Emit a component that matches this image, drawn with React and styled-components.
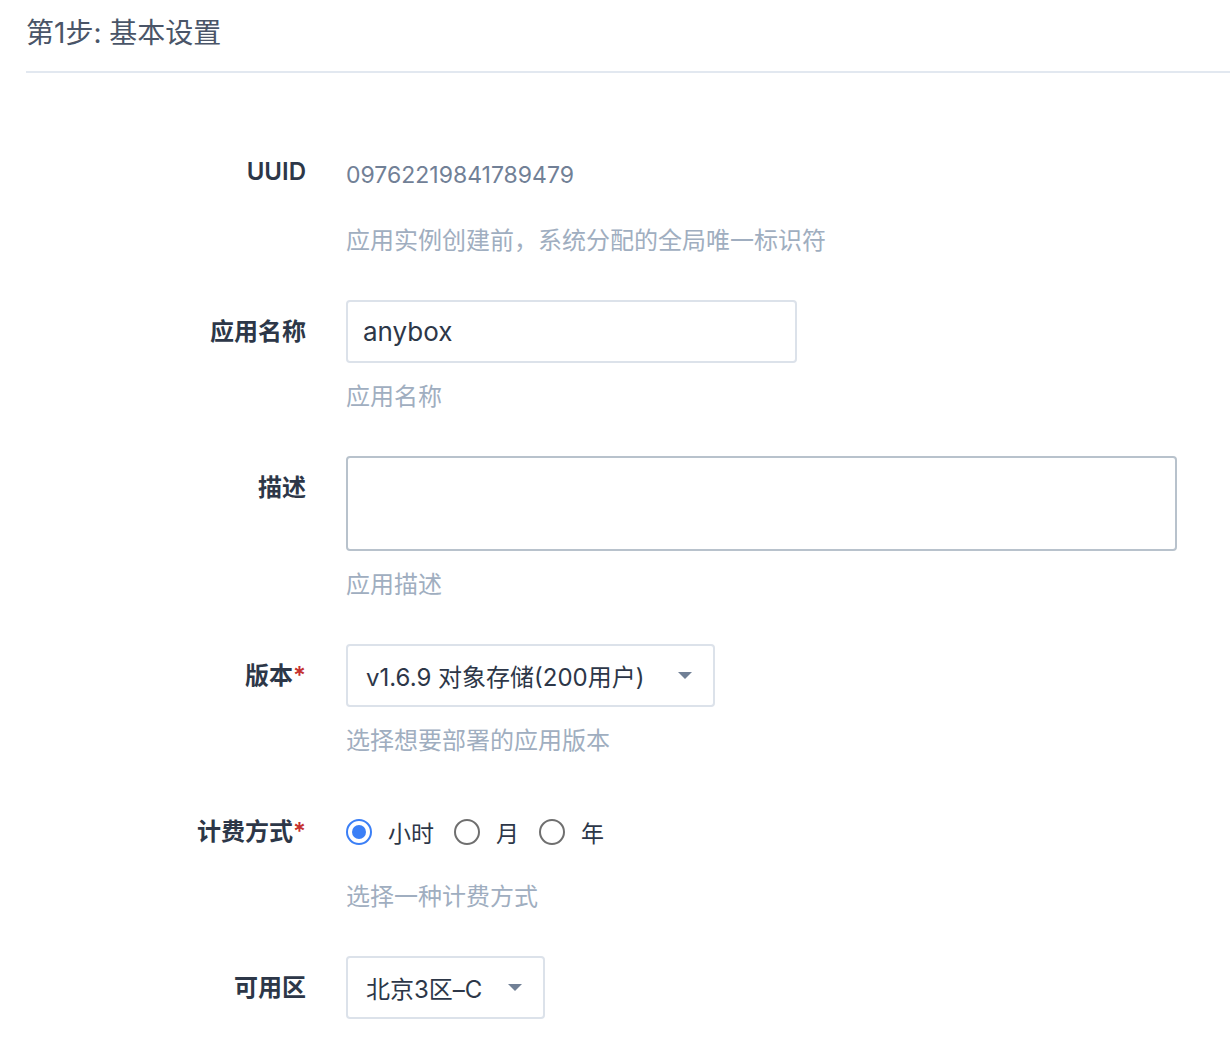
import React from 'react'
import styled, { createGlobalStyle } from 'styled-components'

const GlobalStyle = createGlobalStyle`
    html, body {
        margin: 0;
        padding: 0;
        background: #fff;
    }
    body {
        font-family: Inter, "Noto Sans CJK SC", sans-serif;
        color: #2d3748;
    }
    * {
        box-sizing: border-box;
    }
`;

const Page = styled.div`
    padding-left: 26px;
    width: 1230px;
    overflow: hidden;
`;

const Title = styled.h2`
    margin: 0;
    padding-top: 13px;
    font-weight: normal;
    font-size: 28px;
    line-height: 40px;
    color: #4a5568;
`;

const Divider = styled.div`
    height: 2px;
    margin-top: 18px;
    background: #e2e8f0;
`;

const Form = styled.div`
    margin-top: 71px;
`;

const Row = styled.div`
    display: grid;
    grid-template-columns: 280px 1fr;
    column-gap: 40px;
    margin-bottom: 47px;
`;

const Label = styled.label`
    text-align: right;
    font-size: 24px;
    font-weight: 600;
    line-height: ${p => p.$lh || 63}px;
    color: #2d3748;
`;

const Star = styled.span`
    color: #c53030;
`;

const Field = styled.div`
    display: flex;
    flex-direction: column;
    align-items: flex-start;
`;

const Value = styled.div`
    font-size: 23px;
    line-height: 63px;
    color: #718096;
`;

const Help = styled.div`
    margin-top: 22px;
    font-size: 24px;
    line-height: 24px;
    color: #a0aec0;
`;

const Input = styled.input`
    width: 451px;
    height: 63px;
    border: 2px solid #dce2ea;
    border-radius: 4px;
    padding: 0 15px;
    font-family: inherit;
    font-size: 26px;
    color: #2d3748;
    outline: none;
`;

const TextArea = styled.textarea`
    width: 831px;
    height: 95px;
    border: 2px solid #b8c2cc;
    border-radius: 4px;
    padding: 12px 15px;
    font-family: inherit;
    font-size: 24px;
    resize: none;
    outline: none;
`;

const Select = styled.div`
    display: flex;
    align-items: center;
    justify-content: space-between;
    width: ${p => p.$width}px;
    height: 63px;
    border: 2px solid #dce2ea;
    border-radius: 4px;
    padding: 0 21px 0 18px;
    font-size: 24px;
    color: #2d3748;
`;

const Caret = styled.span`
    width: 0;
    height: 0;
    border-left: 7px solid transparent;
    border-right: 7px solid transparent;
    border-top: 7px solid #718096;
`;

const RadioGroup = styled.div`
    display: flex;
    align-items: center;
    height: 63px;
    gap: 20px;
`;

const RadioOption = styled.label`
    display: flex;
    align-items: center;
    gap: 16px;
    font-size: 23px;
    color: #2d3748;
`;

const RadioCircle = styled.span`
    width: 26px;
    height: 26px;
    border-radius: 50%;
    border: 2px solid ${p => (p.$checked ? '#3b7ff6' : '#6f6f6f')};
    display: flex;
    align-items: center;
    justify-content: center;

    &::after {
        content: '';
        width: 14px;
        height: 14px;
        border-radius: 50%;
        background: ${p => (p.$checked ? '#3b7ff6' : 'transparent')};
    }
`;

const billing = [
    { label: '小时', checked: true },
    { label: '月', checked: false },
    { label: '年', checked: false },
]

const App = () => {
    return (
        <Page>
            <GlobalStyle />
            <Title>第1步: 基本设置</Title>
            <Divider />

            <Form>
                <Row>
                    <Label $lh={56}>UUID</Label>
                    <Field>
                        <Value>09762219841789479</Value>
                        <Help>应用实例创建前，系统分配的全局唯一标识符</Help>
                    </Field>
                </Row>

                <Row>
                    <Label>应用名称</Label>
                    <Field>
                        <Input defaultValue="anybox" />
                        <Help>应用名称</Help>
                    </Field>
                </Row>

                <Row>
                    <Label>描述</Label>
                    <Field>
                        <TextArea />
                        <Help>应用描述</Help>
                    </Field>
                </Row>

                <Row>
                    <Label>版本<Star>*</Star></Label>
                    <Field>
                        <Select $width={369}>
                            <span>v1.6.9 对象存储(200用户)</span>
                            <Caret />
                        </Select>
                        <Help>选择想要部署的应用版本</Help>
                    </Field>
                </Row>

                <Row>
                    <Label>计费方式<Star>*</Star></Label>
                    <Field>
                        <RadioGroup>
                            {billing.map(b => (
                                <RadioOption key={b.label}>
                                    <RadioCircle $checked={b.checked} />
                                    {b.label}
                                </RadioOption>
                            ))}
                        </RadioGroup>
                        <Help>选择一种计费方式</Help>
                    </Field>
                </Row>

                <Row>
                    <Label>可用区</Label>
                    <Field>
                        <Select $width={199}>
                            <span>北京3区–C</span>
                            <Caret />
                        </Select>
                    </Field>
                </Row>
            </Form>
        </Page>
    )
}

export default App
